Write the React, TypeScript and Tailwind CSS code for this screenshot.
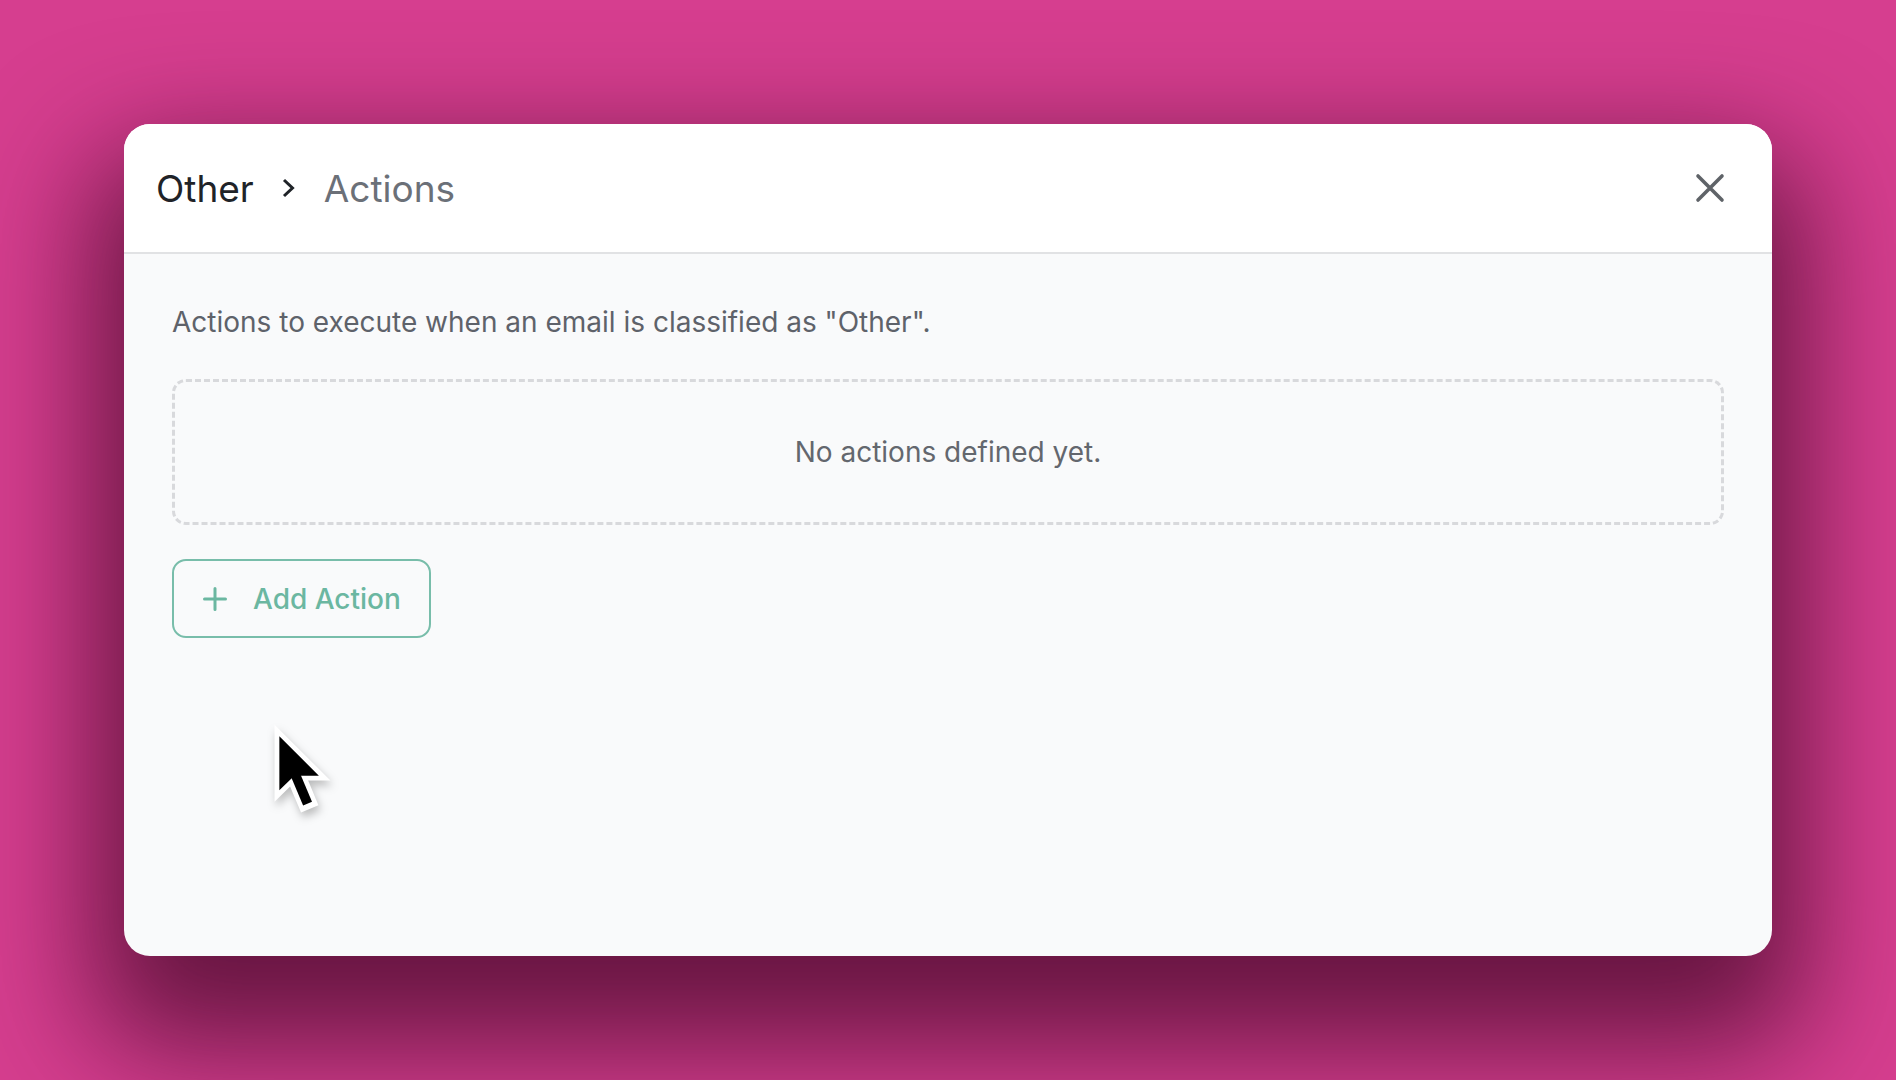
import React from 'react';

const ChevronGlyph: React.FC = () => (
  <svg width="18" height="22" viewBox="0 0 18 22" fill="none" className="shrink-0">
    <polyline points="4,3 12.5,11 4,19" stroke="#1f2328" strokeWidth="3" strokeLinejoin="miter" />
  </svg>
);

const CloseGlyph: React.FC = () => (
  <svg width="30" height="30" viewBox="0 0 30 30" fill="none">
    <path d="M3 3 L27 27 M27 3 L3 27" stroke="#5f6368" strokeWidth="3.6" strokeLinecap="round" />
  </svg>
);

const PlusGlyph: React.FC = () => (
  <svg width="26" height="26" viewBox="0 0 26 26" fill="none" className="shrink-0">
    <path d="M13 2.5 V23.5 M2.5 13 H23.5" stroke="#6bb7a1" strokeWidth="3" strokeLinecap="round" />
  </svg>
);

// macOS style pointer, sits over the modal
const Pointer: React.FC = () => (
  <svg
    width="135"
    height="135"
    viewBox="0 0 28 28"
    className="absolute left-[235px] top-[701px] drop-shadow-[2px_5px_4px_rgba(0,0,0,0.25)]"
  >
    <polygon fill="#FFFFFF" points="8.2,20.9 8.2,4.9 19.8,16.5 13,16.5 12.6,16.6" />
    <polygon fill="#FFFFFF" points="17.3,21.6 13.7,23.1 9,12 12.7,10.5" />
    <rect x="12.5" y="13.6" transform="matrix(0.9221 -0.3871 0.3871 0.9221 -5.7605 6.5909)" width="2" height="8" />
    <polygon points="9.2,7.3 9.2,18.5 12.2,15.6 12.6,15.5 17.4,15.5" />
  </svg>
);

export default function App() {
  return (
    <div
      className="relative flex h-[1080px] w-full items-center justify-center overflow-hidden bg-[#d63e8f]"
      style={{ fontFamily: 'Inter, "Noto Sans", sans-serif' }}
    >
      <div className="flex h-[832px] w-[1648px] flex-col overflow-hidden rounded-[26px] bg-[#f9fafb] shadow-[0_60px_120px_30px_rgba(60,5,35,0.72)]">
        {/* Header */}
        <div className="flex h-[130px] shrink-0 items-center justify-between border-b-2 border-[#e1e2e4] bg-white pl-[32px] pr-[47px]">
          <div className="flex items-center gap-[26px] text-[37px] leading-none">
            <span className="text-[#1f2328]">Other</span>
            <ChevronGlyph />
            <span className="text-[#6b7078]">Actions</span>
          </div>
          <button className="flex items-center justify-center">
            <CloseGlyph />
          </button>
        </div>

        {/* Body */}
        <div className="flex flex-1 flex-col items-start px-[48px] pt-[48px]">
          <p className="text-[28px] leading-[40px] text-[#5e626a]">
            Actions to execute when an email is classified as "Other".
          </p>

          <div className="mt-[37px] flex h-[146px] w-full items-center justify-center rounded-[14px] border-[3px] border-dashed border-[#d8d9dc]">
            <span className="text-[28px] text-[#63676e]">No actions defined yet.</span>
          </div>

          <button className="mt-[34px] flex h-[79px] w-[259px] items-center gap-[25px] rounded-[14px] border-2 border-[#78bdaa] pl-[28px] text-[28px] font-medium text-[#6bb7a1]">
            <PlusGlyph />
            <span>Add Action</span>
          </button>
        </div>
      </div>

      <Pointer />
    </div>
  );
}
